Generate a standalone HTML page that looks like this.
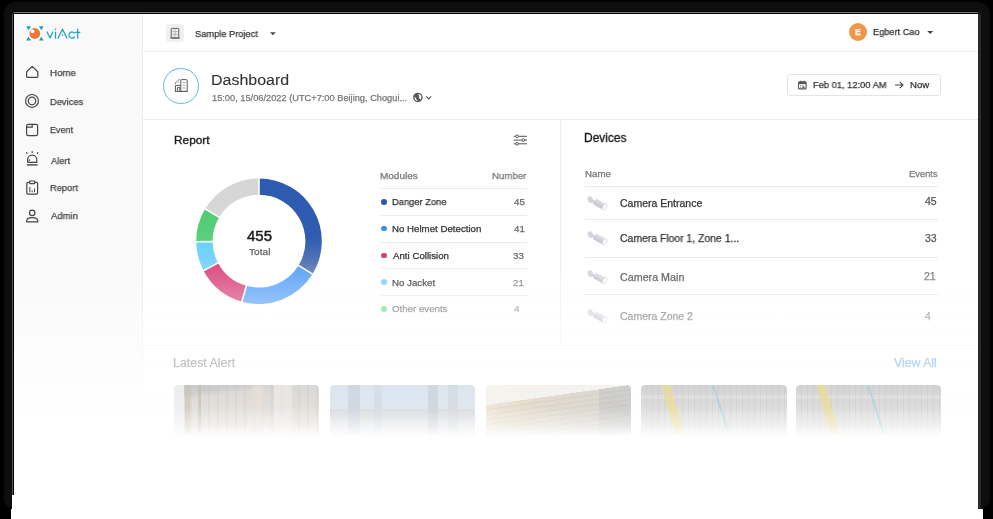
<!DOCTYPE html>
<html><head><meta charset="utf-8"><style>
html,body{margin:0;padding:0;width:993px;height:519px;overflow:hidden;background:#000;position:relative}
.abs{position:absolute}
.t{position:absolute;white-space:nowrap;font-family:"Liberation Sans",sans-serif;will-change:transform;transform-origin:0 0;-webkit-text-stroke:0.25px currentColor}
#shadow{position:absolute;left:4px;top:2px;width:986px;height:507px;border-radius:12px 12px 10px 10px;background:#0e0e0e}
#edge-top{position:absolute;left:14px;top:12px;width:964px;height:1px;background:#7a7a7a;box-shadow:0 -1px 0 #000,0 1px 0 #000}
#edge-left{position:absolute;left:12px;top:14px;width:1px;height:481px;background:#555;box-shadow:1px 0 0 #000}
#edge-right{position:absolute;left:978px;top:14px;width:3px;height:495px;background:#2a2a2a}
#bottomstrip{position:absolute;left:11px;top:509px;width:972px;height:10px;background:#fff}
#app{position:absolute;left:14px;top:14px;width:964px;height:505px;background:#fff;overflow:hidden}
#sidebar{position:absolute;left:0;top:0;width:128px;height:505px;background:#f9f9f9;border-right:1px solid #ececec}
#topbar{}
.card{border-radius:4px 4px 0 0;-webkit-mask-image:linear-gradient(180deg,#000 0px,#000 22px,rgba(0,0,0,.5) 40px,transparent 52px);mask-image:linear-gradient(180deg,#000 0px,#000 22px,rgba(0,0,0,.5) 40px,transparent 52px)}
#fade{position:absolute;left:14px;top:255px;width:964px;height:264px;
background:linear-gradient(180deg,rgba(255,255,255,0) 0px,rgba(255,255,255,0.12) 25px,rgba(255,255,255,0.25) 45px,rgba(255,255,255,0.4) 61px,rgba(255,255,255,0.55) 90px,rgba(255,255,255,0.62) 110px,rgba(255,255,255,0.7) 128px,rgba(255,255,255,0.88) 150px,rgba(255,255,255,1) 180px,rgba(255,255,255,1) 264px)}
</style></head><body>
<div id="shadow"></div><div id="edge-top"></div><div id="edge-left"></div><div id="edge-right"></div><div id="bottomstrip"></div><div class="abs" style="left:12px;top:495px;width:2px;height:14px;background:#fff"></div><div id="app"><div id="sidebar"></div></div><svg class="abs" style="left:24px;top:24px" width="22" height="20" viewBox="24 24 22 20">
<g fill="#1b9cc0"><path d="M26.2 26.2 L31.1 26.2 L28.6 30.3 Z"/><path d="M39 26.2 L43.7 26.2 L41.3 30.3 Z"/>
<path d="M26.2 40.6 L31.1 40.6 L28.6 36.7 Z"/><path d="M39 40.6 L43.7 40.6 L41.3 36.7 Z"/></g>
<circle cx="34.8" cy="33.5" r="5.4" fill="#e97a3c"/>
<circle cx="32.5" cy="31.3" r="1.9" fill="#fff"/>
</svg><svg class="abs" style="left:44px;top:24px" width="40" height="20" viewBox="44 24 40 20" fill="none" stroke="#239dc0" stroke-width="1.25" stroke-linecap="round" stroke-linejoin="round">
<path d="M47.2 32 L50 37.9 L52.8 32"/><path d="M55.5 32.2 L55.5 38.2"/><circle cx="55.5" cy="29.2" r="0.75" fill="#239dc0" stroke="none"/>
<path d="M58 38.2 L62.5 29.4 L67 38.2"/><circle cx="62.5" cy="35.1" r="0.8" fill="#239dc0" stroke="none"/>
<path d="M74.6 33.2 A3.1 3.1 0 1 0 74.6 37"/><path d="M77.7 29.2 L77.7 38.2 M75.8 32.4 L79.8 32.4"/>
</svg><div class="t" style="left:50.12px;top:68.00px;font-size:9.9px;line-height:9.9px;color:#444;transform:scaleX(0.9843);">Home</div>
<div class="t" style="left:50.15px;top:97.00px;font-size:9.9px;line-height:9.9px;color:#444;transform:scaleX(0.9455);">Devices</div>
<div class="t" style="left:50.18px;top:125.00px;font-size:9.9px;line-height:9.9px;color:#444;transform:scaleX(0.9120);">Event</div>
<div class="t" style="left:50.85px;top:156.00px;font-size:9.9px;line-height:9.9px;color:#444;transform:scaleX(0.9434);">Alert</div>
<div class="t" style="left:50.15px;top:183.00px;font-size:9.9px;line-height:9.9px;color:#444;transform:scaleX(0.9425);">Report</div>
<div class="t" style="left:50.85px;top:211.00px;font-size:9.9px;line-height:9.9px;color:#444;transform:scaleX(0.9644);">Admin</div>
<svg class="abs" style="left:20px;top:60px" width="24" height="170" viewBox="20 60 24 170" fill="none" stroke="#454545" stroke-width="1.2" stroke-linejoin="round" stroke-linecap="round">
<path d="M26.6 71.8 L32.2 66.4 L37.8 71.8 L37.8 76.4 Q37.8 77.4 36.8 77.4 L27.6 77.4 Q26.6 77.4 26.6 76.4 Z"/>
<circle cx="32" cy="100.9" r="6.4"/><circle cx="32" cy="100.9" r="3.7"/>
<rect x="26.6" y="124.4" width="11" height="11.2" rx="1.6"/><path d="M26.6 127.2 L32.2 127.2 L32.2 124.4"/>
<path d="M27.6 162.3 L27.6 159.8 A4.6 4.6 0 0 1 36.8 159.8 L36.8 162.3 Z"/><path d="M26.8 164.9 L37.6 164.9" stroke-width="1.7" stroke="#666" stroke-linecap="butt"/>
<path d="M29.3 159.8 L29.3 160.6" /><path d="M26.6 152.6 L27.1 153.3"/><path d="M32.2 151.6 L32.2 152.4"/><path d="M37.8 152.6 L37.3 153.3"/>
<rect x="26.8" y="182.4" width="10.8" height="11.8" rx="1.4"/><rect x="29.7" y="181" width="5" height="2.6" rx="0.6" fill="#f9f9f9"/>
<path d="M29.9 191.8 L29.9 187.4 M32.2 191.8 L32.2 190.8 M34.5 191.8 L34.5 188.8" stroke-width="1"/>
<circle cx="32.2" cy="212.9" r="2.7"/><path d="M26.6 221.8 L26.6 220.9 Q26.6 217.6 32.2 217.6 Q37.8 217.6 37.8 220.9 L37.8 221.8 Z"/>
</svg><div class="abs" style="left:165.8px;top:23.8px;width:18.5px;height:18.5px;background:#f0f0f0;border-radius:3px"></div><svg class="abs" style="left:168px;top:26px" width="14" height="14" viewBox="168 26 14 14" fill="none" stroke="#555" stroke-width="0.9">
<rect x="171.2" y="28.4" width="7.6" height="9.6" rx="0.6"/><path d="M170.3 38 L179.7 38" stroke-width="1.1"/>
<path d="M175 29 L175 37.5 M171.8 31.6 L178.2 31.6 M171.8 34.4 L178.2 34.4" stroke="#999" stroke-width="0.6"/>
</svg><div class="t" style="left:194.88px;top:29.00px;font-size:9.8px;line-height:9.8px;color:#333;transform:scaleX(0.9461);">Sample Project</div>
<svg class="abs" style="left:268px;top:30px" width="10" height="8" viewBox="268 30 10 8"><path d="M270 32.2 L275.8 32.2 L272.9 35.2 Z" fill="#444"/></svg><div class="abs" style="left:848.8px;top:22.6px;width:18.6px;height:18.6px;border-radius:50%;background:#ef9748"></div><div class="t" style="left:854.95px;top:28.00px;font-size:8.8px;line-height:8.8px;color:#fff;font-weight:700;transform:scaleX(0.9654);">E</div>
<div class="t" style="left:872.96px;top:27.00px;font-size:9.6px;line-height:9.6px;color:#333;transform:scaleX(0.9604);">Egbert Cao</div>
<svg class="abs" style="left:925px;top:29px" width="10" height="8" viewBox="925 29 10 8"><path d="M927.2 31 L933.2 31 L930.2 34 Z" fill="#444"/></svg><div class="abs" style="left:163px;top:68px;width:33.5px;height:33.5px;border-radius:50%;border:1.3px solid #5cbcd2"></div><svg class="abs" style="left:172px;top:77px" width="18" height="17" viewBox="172 77 18 17" fill="none" stroke="#595959" stroke-width="1">
<path d="M175.4 91.3 L175.4 85.4 L180.8 85.4"/><path d="M177.4 91.3 L177.4 87.6 L179.8 87.6 L179.8 91.3"/>
<path d="M180.8 91.3 L180.8 80.8 Q180.8 79.6 182 79.6 L186 79.6 Q187.2 79.6 187.2 80.8 L187.2 91.3 Z"/>
<path d="M175.4 84 Q175.8 80.2 180.2 79.6" stroke-dasharray="1.6 0.9"/><path d="M177.6 82.6 L178.6 81.8" />
<path d="M182.6 82.5 L185.4 82.5 M182.6 85.2 L185.4 85.2 M182.6 88 L185.4 88" stroke-width="0.8" stroke="#888"/>
<path d="M174.8 91.5 L187.6 91.5" stroke-width="0.9"/>
</svg><div class="t" style="left:211.42px;top:72.00px;font-size:15.4px;line-height:15.4px;color:#333;transform:scaleX(1.0387);-webkit-text-stroke:0.1px #333;">Dashboard</div>
<div class="t" style="left:212.01px;top:94.00px;font-size:9.0px;line-height:9.0px;color:#777;transform:scaleX(1.0278);">15:00, 15/06/2022 (UTC+7:00 Beijing, Chogui...</div>
<svg class="abs" style="left:411px;top:91px" width="24" height="13" viewBox="411 91 24 13">
<circle cx="417.9" cy="97.4" r="4.5" fill="#595959"/>
<path d="M414 97.4 Q414.6 100.2 417.2 101.4 L417.5 100.4 Q416.2 99.4 415.6 97.4 Q415 96.8 414 97.4 Z" fill="#fff"/>
<path d="M418.4 93.8 Q420.8 94.4 421.8 96.6 Q421.6 98.6 420.6 99.6 Q419.8 98.6 419 98.2 Q418.8 97.2 419.4 96.4 Q418.4 95.4 418.4 93.8 Z" fill="#fff"/>
<circle cx="417.9" cy="97.4" r="4.1" fill="none" stroke="#595959" stroke-width="1"/>
<path d="M426 96.3 L428.6 98.9 L431.2 96.3" fill="none" stroke="#555" stroke-width="1.1"/>
</svg><div class="abs" style="left:787.3px;top:73.6px;width:151.5px;height:20.8px;border:1px solid #e4e4e4;border-radius:3px;background:#fff"></div><svg class="abs" style="left:796px;top:79px" width="13" height="12" viewBox="796 79 13 12" fill="none" stroke="#555" stroke-width="1.1">
<rect x="798.5" y="81.9" width="7.6" height="7" rx="1"/><rect x="798.5" y="81.9" width="7.6" height="2.2" fill="#555" stroke="none"/><path d="M800.6 80.7 L800.6 82.4 M804 80.7 L804 82.4"/>
<path d="M800 85.6 h1.2 M802.2 85.6 h1.2 M800 87.3 h1.2" stroke-width="0.9" stroke="#777"/><rect x="802.3" y="86.4" width="2.2" height="1.8" fill="#555" stroke="none"/>
</svg><div class="t" style="left:813.15px;top:80.00px;font-size:9.5px;line-height:9.5px;color:#333;transform:scaleX(0.9805);">Feb 01, 12:00 AM</div>
<svg class="abs" style="left:893px;top:80px" width="12" height="10" viewBox="893 80 12 10" fill="none" stroke="#444" stroke-width="1.1"><path d="M895 85 L903 85 M899.8 81.8 L903 85 L899.8 88.2"/></svg><div class="t" style="left:910.44px;top:80.00px;font-size:9.5px;line-height:9.5px;color:#333;transform:scaleX(1.0062);">Now</div>
<div class="t" style="left:173.55px;top:135.00px;font-size:11.5px;line-height:11.5px;color:#1a1a1a;transform:scaleX(1.0292);-webkit-text-stroke:0.35px #1a1a1a;">Report</div>
<svg class="abs" style="left:511px;top:132px" width="18" height="15" viewBox="511 132 18 15" fill="none" stroke="#555" stroke-width="1">
<path d="M513.7 136.3 L527 136.3 M513.7 140.1 L527 140.1 M513.7 143.8 L527 143.8"/>
<circle cx="517.1" cy="136.3" r="1.35" fill="#fff"/><circle cx="523.4" cy="140.1" r="1.35" fill="#fff"/><circle cx="517.1" cy="143.8" r="1.35" fill="#fff"/>
</svg><div class="t" style="left:380.30px;top:171.00px;font-size:9.8px;line-height:9.8px;color:#777;transform:scaleX(1.0190);">Modules</div>
<div class="t" style="left:491.63px;top:171.00px;font-size:9.8px;line-height:9.8px;color:#777;transform:scaleX(0.9850);">Number</div>
<div class="abs" style="left:381.2px;top:199.0px;width:5.8px;height:5.8px;border-radius:50%;background:#2c56a8"></div><div class="t" style="left:392.05px;top:197.00px;font-size:9.7px;line-height:9.7px;color:#333;transform:scaleX(0.9633);">Danger Zone</div>
<div class="t" style="left:513.56px;top:197.00px;font-size:9.7px;line-height:9.7px;color:#666;">45</div>
<div class="abs" style="left:381.2px;top:225.5px;width:5.8px;height:5.8px;border-radius:50%;background:#3a8ef0"></div><div class="t" style="left:392.02px;top:224.00px;font-size:9.7px;line-height:9.7px;color:#333;">No Helmet Detection</div>
<div class="t" style="left:513.56px;top:224.00px;font-size:9.7px;line-height:9.7px;color:#666;">41</div>
<div class="abs" style="left:381.2px;top:252.6px;width:5.8px;height:5.8px;border-radius:50%;background:#d53f72"></div><div class="t" style="left:392.75px;top:251.00px;font-size:9.7px;line-height:9.7px;color:#333;">Anti Collision</div>
<div class="t" style="left:513.41px;top:251.00px;font-size:9.7px;line-height:9.7px;color:#6a6a6a;">33</div>
<div class="abs" style="left:381.2px;top:279.4px;width:5.8px;height:5.8px;border-radius:50%;background:#7fd3fb"></div><div class="t" style="left:392.02px;top:278.00px;font-size:9.7px;line-height:9.7px;color:#444;">No Jacket</div>
<div class="t" style="left:513.31px;top:278.00px;font-size:9.7px;line-height:9.7px;color:#8a8a8a;">21</div>
<div class="abs" style="left:381.2px;top:306.0px;width:5.8px;height:5.8px;border-radius:50%;background:#7ddc9f"></div><div class="t" style="left:392.36px;top:304.00px;font-size:9.7px;line-height:9.7px;color:#7a7a7a;">Other events</div>
<div class="t" style="left:513.56px;top:304.00px;font-size:9.7px;line-height:9.7px;color:#9a9a9a;">4</div>
<div class="abs" style="left:381px;top:187.8px;width:146px;height:1px;background:#ebebeb"></div><div class="abs" style="left:381px;top:214.6px;width:146px;height:1px;background:#ebebeb"></div><div class="abs" style="left:381px;top:241.5px;width:146px;height:1px;background:#ebebeb"></div><div class="abs" style="left:381px;top:268.3px;width:146px;height:1px;background:#ebebeb"></div><div class="abs" style="left:381px;top:295.2px;width:146px;height:1px;background:#ebebeb"></div><svg class="abs" style="left:190px;top:170px" width="140" height="140" viewBox="190 170 140 140"><defs>
<linearGradient id="g1" gradientUnits="userSpaceOnUse" x1="0" y1="178" x2="0" y2="277"><stop offset="0" stop-color="#2d5bb0"/><stop offset="0.6" stop-color="#2f5cb0"/><stop offset="1" stop-color="#6884bb"/></linearGradient>
<linearGradient id="g2" gradientUnits="userSpaceOnUse" x1="0" y1="265" x2="0" y2="304"><stop offset="0" stop-color="#5aa1f7"/><stop offset="1" stop-color="#6cadf8"/></linearGradient>
<linearGradient id="g3" gradientUnits="userSpaceOnUse" x1="0" y1="252" x2="0" y2="302"><stop offset="0" stop-color="#d6427a"/><stop offset="1" stop-color="#dd5a8a"/></linearGradient>
<linearGradient id="g4" gradientUnits="userSpaceOnUse" x1="0" y1="240" x2="0" y2="270"><stop offset="0" stop-color="#6cd0fb"/><stop offset="1" stop-color="#7cd6fb"/></linearGradient>
<linearGradient id="g5" gradientUnits="userSpaceOnUse" x1="0" y1="208" x2="0" y2="241"><stop offset="0" stop-color="#52ca74"/><stop offset="1" stop-color="#5ccf7c"/></linearGradient>
<linearGradient id="g6" gradientUnits="userSpaceOnUse" x1="0" y1="178" x2="0" y2="218"><stop offset="0" stop-color="#d5d5d5"/><stop offset="1" stop-color="#d8d8d8"/></linearGradient>
</defs><path d="M259.00 178.40 A62.8 62.8 0 0 1 312.55 274.01 L298.56 265.44 A46.4 46.4 0 0 0 259.00 194.80 Z" fill="url(#g1)"/><path d="M312.55 274.01 A62.8 62.8 0 0 1 241.90 301.63 L246.37 285.85 A46.4 46.4 0 0 0 298.56 265.44 Z" fill="url(#g2)"/><path d="M241.90 301.63 A62.8 62.8 0 0 1 203.55 270.68 L218.03 262.98 A46.4 46.4 0 0 0 246.37 285.85 Z" fill="url(#g3)"/><path d="M203.55 270.68 A62.8 62.8 0 0 1 196.20 241.75 L212.60 241.60 A46.4 46.4 0 0 0 218.03 262.98 Z" fill="url(#g4)"/><path d="M196.20 241.75 A62.8 62.8 0 0 1 205.17 208.86 L219.23 217.30 A46.4 46.4 0 0 0 212.60 241.60 Z" fill="url(#g5)"/><path d="M205.17 208.86 A62.8 62.8 0 0 1 259.00 178.40 L259.00 194.80 A46.4 46.4 0 0 0 219.23 217.30 Z" fill="url(#g6)"/><path d="M259.00 196.80 L259.00 176.40" stroke="#fff" stroke-width="1.6"/><path d="M296.86 264.40 L314.25 275.06" stroke="#fff" stroke-width="1.6"/><path d="M246.91 283.92 L241.36 303.55" stroke="#fff" stroke-width="1.6"/><path d="M219.80 262.04 L201.78 271.62" stroke="#fff" stroke-width="1.6"/><path d="M214.60 241.59 L194.20 241.77" stroke="#fff" stroke-width="1.6"/><path d="M220.94 218.33 L203.46 207.83" stroke="#fff" stroke-width="1.6"/></svg><div class="t" style="left:247.43px;top:229.00px;font-size:14.6px;line-height:14.6px;color:#1a1a1a;transform:scaleX(1.0274);-webkit-text-stroke:0.45px #1a1a1a;">455</div>
<div class="t" style="left:249.35px;top:248.00px;font-size:9.1px;line-height:9.1px;color:#666;transform:scaleX(1.1152);">Total</div>
<div class="abs" style="left:560px;top:120px;width:1px;height:225px;background:#efefef"></div><div class="t" style="left:583.75px;top:132.00px;font-size:12px;line-height:12px;color:#1a1a1a;transform:scaleX(0.9932);-webkit-text-stroke:0.35px #1a1a1a;">Devices</div>
<div class="t" style="left:585.22px;top:169.00px;font-size:9.4px;line-height:9.4px;color:#777;transform:scaleX(1.0408);">Name</div>
<div class="t" style="left:909.05px;top:169.00px;font-size:9.4px;line-height:9.4px;color:#777;transform:scaleX(0.9915);">Events</div>
<div class="t" style="left:620.28px;top:198.00px;font-size:10.5px;line-height:10.5px;color:#333;">Camera Entrance</div>
<div class="t" style="left:924.74px;top:196.00px;font-size:10.5px;line-height:10.5px;color:#555;">45</div>
<svg class="abs" style="left:585px;top:194.3px" width="24" height="18" viewBox="585 194.3 24 18">
<defs><linearGradient id="cg" x1="0" y1="0" x2="0" y2="1"><stop offset="0" stop-color="#e2e2ea"/><stop offset="1" stop-color="#c2c2cd"/></linearGradient></defs>
<ellipse cx="590.4" cy="199.9" rx="2.6" ry="3.4" transform="rotate(-25 590.4 199.9)" fill="#d4d4de"/><path d="M592.4 201.2 L595 202.4" stroke="#cdcdd7" stroke-width="2.4"/>
<g transform="rotate(28 599.5 204.3)"><rect x="593.6" y="201" width="11.8" height="6.6" rx="1" fill="url(#cg)"/>
<ellipse cx="605.3" cy="204.3" rx="1.9" ry="3.3" fill="#fff" stroke="#cfcfd9" stroke-width="0.7"/></g>
</svg><div class="t" style="left:620.28px;top:233.00px;font-size:10.5px;line-height:10.5px;color:#333;transform:scaleX(0.9911);">Camera Floor 1, Zone 1...</div>
<div class="t" style="left:924.58px;top:233.00px;font-size:10.5px;line-height:10.5px;color:#555;">33</div>
<svg class="abs" style="left:585px;top:229.3px" width="24" height="18" viewBox="585 194.3 24 18">
<defs><linearGradient id="cg" x1="0" y1="0" x2="0" y2="1"><stop offset="0" stop-color="#e2e2ea"/><stop offset="1" stop-color="#c2c2cd"/></linearGradient></defs>
<ellipse cx="590.4" cy="199.9" rx="2.6" ry="3.4" transform="rotate(-25 590.4 199.9)" fill="#d4d4de"/><path d="M592.4 201.2 L595 202.4" stroke="#cdcdd7" stroke-width="2.4"/>
<g transform="rotate(28 599.5 204.3)"><rect x="593.6" y="201" width="11.8" height="6.6" rx="1" fill="url(#cg)"/>
<ellipse cx="605.3" cy="204.3" rx="1.9" ry="3.3" fill="#fff" stroke="#cfcfd9" stroke-width="0.7"/></g>
</svg><div class="t" style="left:620.26px;top:272.00px;font-size:10.5px;line-height:10.5px;color:#585858;transform:scaleX(1.0212);">Camera Main</div>
<div class="t" style="left:924.48px;top:271.00px;font-size:10.5px;line-height:10.5px;color:#777;">21</div>
<svg class="abs" style="left:585px;top:267.5px" width="24" height="18" viewBox="585 194.3 24 18">
<defs><linearGradient id="cg" x1="0" y1="0" x2="0" y2="1"><stop offset="0" stop-color="#e2e2ea"/><stop offset="1" stop-color="#c2c2cd"/></linearGradient></defs>
<ellipse cx="590.4" cy="199.9" rx="2.6" ry="3.4" transform="rotate(-25 590.4 199.9)" fill="#d4d4de"/><path d="M592.4 201.2 L595 202.4" stroke="#cdcdd7" stroke-width="2.4"/>
<g transform="rotate(28 599.5 204.3)"><rect x="593.6" y="201" width="11.8" height="6.6" rx="1" fill="url(#cg)"/>
<ellipse cx="605.3" cy="204.3" rx="1.9" ry="3.3" fill="#fff" stroke="#cfcfd9" stroke-width="0.7"/></g>
</svg><div class="t" style="left:620.27px;top:311.00px;font-size:10.5px;line-height:10.5px;color:#707070;">Camera Zone 2</div>
<div class="t" style="left:924.74px;top:311.00px;font-size:10.5px;line-height:10.5px;color:#8a8a8a;">4</div>
<svg class="abs" style="left:585px;top:306.5px" width="24" height="18" viewBox="585 194.3 24 18">
<defs><linearGradient id="cg" x1="0" y1="0" x2="0" y2="1"><stop offset="0" stop-color="#e2e2ea"/><stop offset="1" stop-color="#c2c2cd"/></linearGradient></defs>
<ellipse cx="590.4" cy="199.9" rx="2.6" ry="3.4" transform="rotate(-25 590.4 199.9)" fill="#d4d4de"/><path d="M592.4 201.2 L595 202.4" stroke="#cdcdd7" stroke-width="2.4"/>
<g transform="rotate(28 599.5 204.3)"><rect x="593.6" y="201" width="11.8" height="6.6" rx="1" fill="url(#cg)"/>
<ellipse cx="605.3" cy="204.3" rx="1.9" ry="3.3" fill="#fff" stroke="#cfcfd9" stroke-width="0.7"/></g>
</svg><div class="abs" style="left:585px;top:186.1px;width:353px;height:1px;background:#ebebeb"></div><div class="abs" style="left:585px;top:219.3px;width:353px;height:1px;background:#ebebeb"></div><div class="abs" style="left:585px;top:256.5px;width:353px;height:1px;background:#ebebeb"></div><div class="abs" style="left:585px;top:293.8px;width:353px;height:1px;background:#ebebeb"></div><div class="abs" style="left:143px;top:344.5px;width:835px;height:1px;background:#efefef"></div><div class="t" style="left:173.31px;top:357.00px;font-size:12.3px;line-height:12.3px;color:#666;transform:scaleX(1.0090);">Latest Alert</div>
<div class="t" style="left:893.64px;top:357.00px;font-size:12.3px;line-height:12.3px;color:#3d8fe0;">View All</div>
<div id="fade"></div><div class="abs card" style="left:174px;top:385px;width:145.0px;height:60px;background:linear-gradient(90deg,rgba(238,241,244,.9) 0px,rgba(238,241,244,.9) 10px,transparent 10px,transparent 11px,rgba(205,188,165,.5) 11px,rgba(205,188,165,.5) 16px,transparent 16px,transparent 24px,rgba(200,183,160,.45) 24px,rgba(200,183,160,.45) 27px,transparent 27px,transparent 78px,rgba(232,224,214,.6) 78px,rgba(232,224,214,.6) 90px,transparent 90px,transparent 100px,rgba(238,235,231,.7) 100px,rgba(238,235,231,.7) 118px,transparent 118px),linear-gradient(172deg,rgba(190,190,190,.55) 0px,rgba(190,190,190,.45) 10px,transparent 16px),repeating-linear-gradient(90deg,transparent 0px,transparent 7px,rgba(170,160,150,.12) 7px,rgba(170,160,150,.12) 9px),linear-gradient(180deg,#d8d8d8 0px,#dcdbda 8px,#e0ddd9 14px,#e4e1dc 30px,#eae7e3 100%)"></div><div class="abs card" style="left:329.5px;top:385px;width:145.5px;height:60px;background:linear-gradient(90deg,transparent 0px,transparent 18px,rgba(205,213,222,.8) 18px,rgba(205,213,222,.8) 30px,transparent 30px,transparent 44px,rgba(212,218,226,.7) 44px,rgba(212,218,226,.7) 52px,transparent 52px,transparent 98px,rgba(205,211,218,.8) 98px,rgba(205,211,218,.8) 108px,transparent 108px,transparent 118px,rgba(212,216,222,.7) 118px,rgba(212,216,222,.7) 128px,transparent 128px),linear-gradient(180deg,transparent 0px,transparent 24px,rgba(200,200,200,.35) 24px,rgba(200,200,200,.2) 34px,transparent 40px),linear-gradient(180deg,#dae5ef 0px,#dfe8f0 18px,#e2e6ea 30px,#e8e8e8 100%)"></div><div class="abs card" style="left:485.8px;top:385px;width:144.9px;height:60px;background:linear-gradient(172deg,rgba(246,244,240,.95) 0px,rgba(246,244,240,.95) 20px,transparent 20px),repeating-linear-gradient(172deg,transparent 0px,transparent 4px,rgba(180,165,145,.16) 4px,rgba(180,165,145,.16) 5px),linear-gradient(90deg,transparent 0px,transparent 113px,rgba(200,200,200,.6) 113px),linear-gradient(90deg,#eee6d8 0px,#e8dfcf 30px,#e2dace 60px,#ddd8d0 100px,#d8d8d8 146px)"></div><div class="abs card" style="left:641.4px;top:385px;width:146.0px;height:60px;background:linear-gradient(74deg,transparent 0px,transparent 36px,rgba(236,220,150,.75) 36px,rgba(236,220,150,.75) 45px,transparent 45px),linear-gradient(72deg,transparent 0px,transparent 86px,rgba(150,208,222,.55) 86px,rgba(150,208,222,.55) 88px,transparent 88px),repeating-linear-gradient(90deg,transparent 0px,transparent 5px,rgba(150,150,150,.12) 5px,rgba(150,150,150,.12) 6px),linear-gradient(180deg,transparent 0px,transparent 10px,rgba(235,232,228,.5) 10px,rgba(235,232,228,.5) 14px,transparent 14px),linear-gradient(180deg,#d2d3d4 0px,#d9d9da 15px,#e0e0e0 30px,#e8e8e7 100%)"></div><div class="abs card" style="left:796.1px;top:385px;width:145.2px;height:60px;background:linear-gradient(74deg,transparent 0px,transparent 36px,rgba(236,220,150,.75) 36px,rgba(236,220,150,.75) 45px,transparent 45px),linear-gradient(72deg,transparent 0px,transparent 86px,rgba(150,208,222,.55) 86px,rgba(150,208,222,.55) 88px,transparent 88px),repeating-linear-gradient(90deg,transparent 0px,transparent 5px,rgba(150,150,150,.12) 5px,rgba(150,150,150,.12) 6px),linear-gradient(180deg,transparent 0px,transparent 10px,rgba(235,232,228,.5) 10px,rgba(235,232,228,.5) 14px,transparent 14px),linear-gradient(180deg,#d2d3d4 0px,#d9d9da 15px,#e0e0e0 30px,#e8e8e7 100%)"></div>
<div class="abs" style="left:143px;top:51px;width:835px;height:1px;background:#ececec"></div>
<div class="abs" style="left:143px;top:119px;width:835px;height:1px;background:#ececec"></div>
</body></html>
